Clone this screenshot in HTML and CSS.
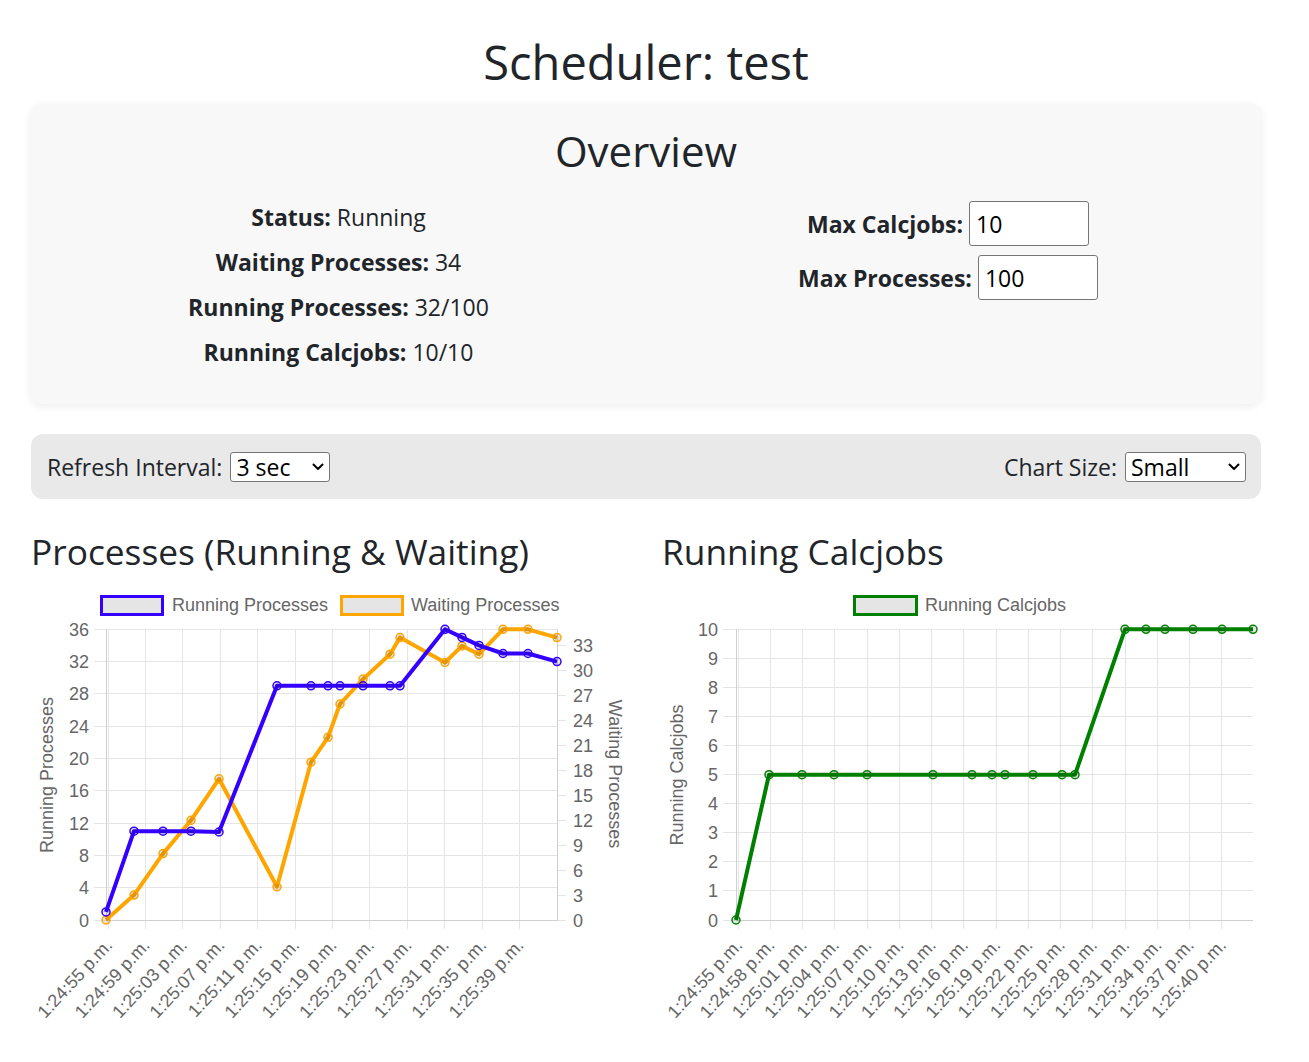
FILE: index.html
```html
<!DOCTYPE html>
<html lang="en">
<head>
<meta charset="utf-8">
<title>Scheduler: test</title>
<link rel="stylesheet" href="styles.css">
</head>
<body>
<div class="page">
  <h1 class="title">Scheduler: test</h1>

  <section class="card">
    <h2 class="card-title">Overview</h2>
    <div class="overview-grid">
      <div class="stats">
        <p class="stat"><span class="stat-key">Status:</span> Running</p>
        <p class="stat"><span class="stat-key">Waiting Processes:</span> 34</p>
        <p class="stat"><span class="stat-key">Running Processes:</span> 32/100</p>
        <p class="stat"><span class="stat-key">Running Calcjobs:</span> 10/10</p>
      </div>
      <div class="limits">
        <div class="limit-row"><label class="limit-label" for="maxcj">Max Calcjobs:</label><input class="limit-input" id="maxcj" type="text" value="10"></div>
        <div class="limit-row"><label class="limit-label" for="maxproc">Max Processes:</label><input class="limit-input" id="maxproc" type="text" value="100"></div>
      </div>
    </div>
  </section>

  <div class="controls">
    <label class="control">Refresh Interval:
      <span class="select-wrap">
        <select class="select select-interval">
          <option>1 sec</option>
          <option selected>3 sec</option>
          <option>5 sec</option>
          <option>10 sec</option>
        </select>
        <svg class="chevron" width="12" height="8" viewBox="0 0 12 8" xmlns="http://www.w3.org/2000/svg"><path d="M1.5 1.5 6 6l4.5-4.5"/></svg>
      </span>
    </label>
    <label class="control">Chart Size:
      <span class="select-wrap">
        <select class="select select-size">
          <option selected>Small</option>
          <option>Medium</option>
          <option>Large</option>
        </select>
        <svg class="chevron" width="12" height="8" viewBox="0 0 12 8" xmlns="http://www.w3.org/2000/svg"><path d="M1.5 1.5 6 6l4.5-4.5"/></svg>
      </span>
    </label>
  </div>

  <div class="charts">
    <div class="chart">
      <h2 class="chart-title">Processes (Running &amp; Waiting)</h2>
      <svg class="chart-svg" width="600" height="450" viewBox="31 585 600 450" xmlns="http://www.w3.org/2000/svg">
        <rect class="legend-box lb-blue" x="101.5" y="596.5" width="61" height="18"/>
        <text class="legend-text" x="172" y="611">Running Processes</text>
        <rect class="legend-box lb-orange" x="341.5" y="596.5" width="61" height="18"/>
        <text class="legend-text" x="411" y="611">Waiting Processes</text>

        <g class="grid">
          <line x1="94" y1="629.5" x2="557" y2="629.5"/>
          <line x1="94" y1="661.5" x2="557" y2="661.5"/>
          <line x1="94" y1="693.5" x2="557" y2="693.5"/>
          <line x1="94" y1="726.5" x2="557" y2="726.5"/>
          <line x1="94" y1="758.5" x2="557" y2="758.5"/>
          <line x1="94" y1="790.5" x2="557" y2="790.5"/>
          <line x1="94" y1="823.5" x2="557" y2="823.5"/>
          <line x1="94" y1="855.5" x2="557" y2="855.5"/>
          <line x1="94" y1="887.5" x2="557" y2="887.5"/>
          <line x1="94" y1="920.5" x2="106" y2="920.5"/>
          <line x1="108.5" y1="629" x2="108.5" y2="929"/>
          <line x1="145.5" y1="629" x2="145.5" y2="929"/>
          <line x1="182.5" y1="629" x2="182.5" y2="929"/>
          <line x1="220.5" y1="629" x2="220.5" y2="929"/>
          <line x1="257.5" y1="629" x2="257.5" y2="929"/>
          <line x1="295.5" y1="629" x2="295.5" y2="929"/>
          <line x1="332.5" y1="629" x2="332.5" y2="929"/>
          <line x1="369.5" y1="629" x2="369.5" y2="929"/>
          <line x1="407.5" y1="629" x2="407.5" y2="929"/>
          <line x1="444.5" y1="629" x2="444.5" y2="929"/>
          <line x1="482.5" y1="629" x2="482.5" y2="929"/>
          <line x1="519.5" y1="629" x2="519.5" y2="929"/>
          <line x1="557" y1="920.5" x2="566" y2="920.5"/>
          <line x1="557" y1="895.5" x2="566" y2="895.5"/>
          <line x1="557" y1="870.5" x2="566" y2="870.5"/>
          <line x1="557" y1="845.5" x2="566" y2="845.5"/>
          <line x1="557" y1="820.5" x2="566" y2="820.5"/>
          <line x1="557" y1="795.5" x2="566" y2="795.5"/>
          <line x1="557" y1="770.5" x2="566" y2="770.5"/>
          <line x1="557" y1="745.5" x2="566" y2="745.5"/>
          <line x1="557" y1="720.5" x2="566" y2="720.5"/>
          <line x1="557" y1="695.5" x2="566" y2="695.5"/>
          <line x1="557" y1="670.5" x2="566" y2="670.5"/>
          <line x1="557" y1="645.5" x2="566" y2="645.5"/>
        </g>
        <g class="axis">
          <line x1="106.5" y1="629" x2="106.5" y2="921"/>
          <line x1="557.5" y1="629" x2="557.5" y2="921"/>
          <line x1="106" y1="920.5" x2="557" y2="920.5"/>
        </g>

        <g class="tick-label">
          <text x="89" y="927">0</text>
          <text x="89" y="894.2">4</text>
          <text x="89" y="861.9">8</text>
          <text x="89" y="829.6">12</text>
          <text x="89" y="797.3">16</text>
          <text x="89" y="765">20</text>
          <text x="89" y="732.7">24</text>
          <text x="89" y="700.4">28</text>
          <text x="89" y="668.1">32</text>
          <text x="89" y="635.8">36</text>
        </g>
        <g class="tick-label tick-right">
          <text x="573" y="926.5">0</text>
          <text x="573" y="901.6">3</text>
          <text x="573" y="876.7">6</text>
          <text x="573" y="851.7">9</text>
          <text x="573" y="826.8">12</text>
          <text x="573" y="801.9">15</text>
          <text x="573" y="777">18</text>
          <text x="573" y="752.1">21</text>
          <text x="573" y="727.2">24</text>
          <text x="573" y="702.2">27</text>
          <text x="573" y="677.3">30</text>
          <text x="573" y="652.4">33</text>
        </g>

        <text class="axis-title" transform="translate(53 775) rotate(-90)">Running Processes</text>
        <text class="axis-title" transform="translate(609 774) rotate(90)">Waiting Processes</text>

        <g class="xlabel">
          <text transform="translate(109 942) rotate(-47)">1:24:55 p.m.</text>
          <text transform="translate(146.4 942) rotate(-47)">1:24:59 p.m.</text>
          <text transform="translate(183.8 942) rotate(-47)">1:25:03 p.m.</text>
          <text transform="translate(221.2 942) rotate(-47)">1:25:07 p.m.</text>
          <text transform="translate(258.6 942) rotate(-47)">1:25:11 p.m.</text>
          <text transform="translate(296 942) rotate(-47)">1:25:15 p.m.</text>
          <text transform="translate(333.4 942) rotate(-47)">1:25:19 p.m.</text>
          <text transform="translate(370.8 942) rotate(-47)">1:25:23 p.m.</text>
          <text transform="translate(408.2 942) rotate(-47)">1:25:27 p.m.</text>
          <text transform="translate(445.6 942) rotate(-47)">1:25:31 p.m.</text>
          <text transform="translate(483 942) rotate(-47)">1:25:35 p.m.</text>
          <text transform="translate(520.4 942) rotate(-47)">1:25:39 p.m.</text>
        </g>

        <polyline class="series s-orange" points="106,920 134,895.1 163,853.6 191,820.3 219,778.8 277,886.8 311,762.2 328,737.3 340,704 363,679.1 390,654.2 400,637.6 445,662.5 462,645.9 479,654.2 503,629.3 528,629.3 557,637.6"/>
        <g class="pts p-orange">
          <circle cx="106" cy="920" r="4"/><circle cx="134" cy="895.1" r="4"/><circle cx="163" cy="853.6" r="4"/><circle cx="191" cy="820.3" r="4"/><circle cx="219" cy="778.8" r="4"/><circle cx="277" cy="886.8" r="4"/><circle cx="311" cy="762.2" r="4"/><circle cx="328" cy="737.3" r="4"/><circle cx="340" cy="704" r="4"/><circle cx="363" cy="679.1" r="4"/><circle cx="390" cy="654.2" r="4"/><circle cx="400" cy="637.6" r="4"/><circle cx="445" cy="662.5" r="4"/><circle cx="462" cy="645.9" r="4"/><circle cx="479" cy="654.2" r="4"/><circle cx="503" cy="629.3" r="4"/><circle cx="528" cy="629.3" r="4"/><circle cx="557" cy="637.6" r="4"/>
        </g>
        <polyline class="series s-blue" points="106,911.9 134,831.2 163,831.2 191,831.2 219,832 277,685.8 311,685.8 328,685.8 340,685.8 363,685.8 390,685.8 400,685.8 445,629.3 462,637.4 479,645.4 503,653.5 528,653.5 557,661.6"/>
        <g class="pts p-blue">
          <circle cx="106" cy="911.9" r="4"/><circle cx="134" cy="831.2" r="4"/><circle cx="163" cy="831.2" r="4"/><circle cx="191" cy="831.2" r="4"/><circle cx="219" cy="832" r="4"/><circle cx="277" cy="685.8" r="4"/><circle cx="311" cy="685.8" r="4"/><circle cx="328" cy="685.8" r="4"/><circle cx="340" cy="685.8" r="4"/><circle cx="363" cy="685.8" r="4"/><circle cx="390" cy="685.8" r="4"/><circle cx="400" cy="685.8" r="4"/><circle cx="445" cy="629.3" r="4"/><circle cx="462" cy="637.4" r="4"/><circle cx="479" cy="645.4" r="4"/><circle cx="503" cy="653.5" r="4"/><circle cx="528" cy="653.5" r="4"/><circle cx="557" cy="661.6" r="4"/>
        </g>
      </svg>
    </div>

    <div class="chart">
      <h2 class="chart-title">Running Calcjobs</h2>
      <svg class="chart-svg" width="599" height="450" viewBox="662 585 599 450" xmlns="http://www.w3.org/2000/svg">
        <rect class="legend-box lb-green" x="854.5" y="596.5" width="62" height="18"/>
        <text class="legend-text" x="925" y="611">Running Calcjobs</text>

        <g class="grid">
          <line x1="723" y1="629.5" x2="1253" y2="629.5"/>
          <line x1="723" y1="658.5" x2="1253" y2="658.5"/>
          <line x1="723" y1="687.5" x2="1253" y2="687.5"/>
          <line x1="723" y1="716.5" x2="1253" y2="716.5"/>
          <line x1="723" y1="745.5" x2="1253" y2="745.5"/>
          <line x1="723" y1="774.5" x2="1253" y2="774.5"/>
          <line x1="723" y1="803.5" x2="1253" y2="803.5"/>
          <line x1="723" y1="832.5" x2="1253" y2="832.5"/>
          <line x1="723" y1="861.5" x2="1253" y2="861.5"/>
          <line x1="723" y1="890.5" x2="1253" y2="890.5"/>
          <line x1="723" y1="920.5" x2="736" y2="920.5"/>
          <line x1="738.5" y1="629" x2="738.5" y2="929"/>
          <line x1="770.5" y1="629" x2="770.5" y2="929"/>
          <line x1="802.5" y1="629" x2="802.5" y2="929"/>
          <line x1="834.5" y1="629" x2="834.5" y2="929"/>
          <line x1="867.5" y1="629" x2="867.5" y2="929"/>
          <line x1="899.5" y1="629" x2="899.5" y2="929"/>
          <line x1="931.5" y1="629" x2="931.5" y2="929"/>
          <line x1="963.5" y1="629" x2="963.5" y2="929"/>
          <line x1="996.5" y1="629" x2="996.5" y2="929"/>
          <line x1="1028.5" y1="629" x2="1028.5" y2="929"/>
          <line x1="1060.5" y1="629" x2="1060.5" y2="929"/>
          <line x1="1092.5" y1="629" x2="1092.5" y2="929"/>
          <line x1="1125.5" y1="629" x2="1125.5" y2="929"/>
          <line x1="1157.5" y1="629" x2="1157.5" y2="929"/>
          <line x1="1189.5" y1="629" x2="1189.5" y2="929"/>
          <line x1="1221.5" y1="629" x2="1221.5" y2="929"/>
        </g>
        <g class="axis">
          <line x1="736.5" y1="629" x2="736.5" y2="921"/>
          <line x1="736" y1="920.5" x2="1253" y2="920.5"/>
        </g>

        <g class="tick-label">
          <text x="718" y="926.5">0</text>
          <text x="718" y="897.4">1</text>
          <text x="718" y="868.4">2</text>
          <text x="718" y="839.3">3</text>
          <text x="718" y="810.2">4</text>
          <text x="718" y="781.2">5</text>
          <text x="718" y="752.1">6</text>
          <text x="718" y="723">7</text>
          <text x="718" y="693.9">8</text>
          <text x="718" y="664.9">9</text>
          <text x="718" y="635.8">10</text>
        </g>

        <text class="axis-title" transform="translate(683 775) rotate(-90)">Running Calcjobs</text>

        <g class="xlabel">
          <text transform="translate(739 942) rotate(-47)">1:24:55 p.m.</text>
          <text transform="translate(771.25 942) rotate(-47)">1:24:58 p.m.</text>
          <text transform="translate(803.5 942) rotate(-47)">1:25:01 p.m.</text>
          <text transform="translate(835.75 942) rotate(-47)">1:25:04 p.m.</text>
          <text transform="translate(868 942) rotate(-47)">1:25:07 p.m.</text>
          <text transform="translate(900.25 942) rotate(-47)">1:25:10 p.m.</text>
          <text transform="translate(932.5 942) rotate(-47)">1:25:13 p.m.</text>
          <text transform="translate(964.75 942) rotate(-47)">1:25:16 p.m.</text>
          <text transform="translate(997 942) rotate(-47)">1:25:19 p.m.</text>
          <text transform="translate(1029.25 942) rotate(-47)">1:25:22 p.m.</text>
          <text transform="translate(1061.5 942) rotate(-47)">1:25:25 p.m.</text>
          <text transform="translate(1093.75 942) rotate(-47)">1:25:28 p.m.</text>
          <text transform="translate(1126 942) rotate(-47)">1:25:31 p.m.</text>
          <text transform="translate(1158.25 942) rotate(-47)">1:25:34 p.m.</text>
          <text transform="translate(1190.5 942) rotate(-47)">1:25:37 p.m.</text>
          <text transform="translate(1222.75 942) rotate(-47)">1:25:40 p.m.</text>
        </g>

        <polyline class="series s-green" points="736,920 769,774.7 802,774.7 834,774.7 867,774.7 933,774.7 972,774.7 992,774.7 1005,774.7 1033,774.7 1062,774.7 1075,774.7 1125,629.3 1146,629.3 1165,629.3 1193,629.3 1222,629.3 1253,629.3"/>
        <g class="pts p-green">
          <circle cx="736" cy="920" r="4"/><circle cx="769" cy="774.7" r="4"/><circle cx="802" cy="774.7" r="4"/><circle cx="834" cy="774.7" r="4"/><circle cx="867" cy="774.7" r="4"/><circle cx="933" cy="774.7" r="4"/><circle cx="972" cy="774.7" r="4"/><circle cx="992" cy="774.7" r="4"/><circle cx="1005" cy="774.7" r="4"/><circle cx="1033" cy="774.7" r="4"/><circle cx="1062" cy="774.7" r="4"/><circle cx="1075" cy="774.7" r="4"/><circle cx="1125" cy="629.3" r="4"/><circle cx="1146" cy="629.3" r="4"/><circle cx="1165" cy="629.3" r="4"/><circle cx="1193" cy="629.3" r="4"/><circle cx="1222" cy="629.3" r="4"/><circle cx="1253" cy="629.3" r="4"/>
        </g>
      </svg>
    </div>
  </div>
</div>
</body>
</html>
```

FILE: styles.css
```css
* {
  box-sizing: border-box;
}

body {
  margin: 0;
  font-family: "Open Sans", "Noto Sans", sans-serif;
  color: #212529;
  background: #ffffff;
}

.page {
  width: 1230px;
  margin-left: 31px;
}

.title {
  margin: 34px 0 14px;
  font-size: 47px;
  font-weight: 400;
  line-height: 1.2;
  text-align: center;
}

.card {
  background: #f8f8f8;
  border-radius: 10px;
  box-shadow: 0 2px 10px rgba(0, 0, 0, 0.08);
  padding: 22px 0 29px;
}

.card-title {
  margin: 0 0 19px;
  font-size: 42px;
  font-weight: 400;
  line-height: 50px;
  text-align: center;
}

.overview-grid {
  display: grid;
  grid-template-columns: 1fr 1fr;
  align-items: start;
}

.stats {
  text-align: center;
}

.stat {
  margin: 0;
  font-size: 23px;
  line-height: 45px;
}

.stat-key {
  font-weight: 700;
}

.limits {
  display: flex;
  flex-direction: column;
  gap: 9px;
  padding-top: 6px;
  padding-right: 11px;
}

.limit-row {
  display: flex;
  justify-content: center;
  align-items: center;
  gap: 6px;
}

.limit-label {
  font-size: 23px;
  font-weight: 700;
}

.limit-input {
  width: 120px;
  height: 45px;
  font: 23px "Open Sans", "Noto Sans", sans-serif;
  padding: 0 6px;
  border: 1px solid #767676;
  border-radius: 3px;
  background: #ffffff;
  color: #000000;
}

.controls {
  margin-top: 30px;
  height: 65px;
  background: #e9e9e9;
  border-radius: 12px;
  padding: 0 15px 0 16px;
  display: flex;
  justify-content: space-between;
  align-items: center;
}

.control {
  display: flex;
  align-items: center;
  gap: 8px;
  font-size: 23px;
}

.select-wrap {
  position: relative;
  display: inline-flex;
}

.select {
  appearance: none;
  -webkit-appearance: none;
  height: 30px;
  font: 23px/28px "Open Sans", "Noto Sans", sans-serif;
  border: 1px solid #767676;
  border-radius: 3px;
  background-color: #ffffff;
  color: #000000;
  padding: 0 5px;
  margin: 0;
}

.select-interval {
  width: 100px;
}

.select-size {
  width: 121px;
}

.chevron {
  position: absolute;
  right: 6px;
  top: 11px;
  pointer-events: none;
  fill: none;
  stroke: #000000;
  stroke-width: 2;
  stroke-linecap: round;
  stroke-linejoin: round;
}

.charts {
  display: grid;
  grid-template-columns: 600px 599px;
  column-gap: 31px;
  margin-top: 31px;
}

.chart-title {
  margin: 0 0 13px;
  font-size: 35.3px;
  font-weight: 400;
  line-height: 42px;
}

.chart-svg {
  display: block;
  overflow: visible;
}

.legend-box {
  fill: rgba(0, 0, 0, 0.1);
  stroke-width: 3;
}

.lb-blue { stroke: #3300ff; }
.lb-orange { stroke: #ffa500; }
.lb-green { stroke: #008000; }

.legend-text,
.tick-label,
.axis-title,
.xlabel {
  font-family: "Liberation Sans", Arial, sans-serif;
  fill: #666666;
}

.legend-text {
  font-size: 18px;
}

.tick-label {
  font-size: 18px;
  text-anchor: end;
}

.tick-right {
  text-anchor: start;
}

.axis-title {
  font-size: 18px;
  text-anchor: middle;
}

.xlabel {
  font-size: 18px;
  text-anchor: end;
  dominant-baseline: central;
}

.grid line {
  stroke: #e5e5e5;
  stroke-width: 1;
}

.axis line {
  stroke: #d0d0d0;
  stroke-width: 1;
}

.series {
  fill: none;
  stroke-width: 4;
  stroke-linejoin: round;
}

.s-blue { stroke: #3300ff; }
.s-orange { stroke: #ffa500; }
.s-green { stroke: #008000; }

.pts circle {
  fill: rgba(0, 0, 0, 0.1);
  stroke-width: 1.5;
}

.p-blue circle { stroke: #3300ff; }
.p-orange circle { stroke: #ffa500; }
.p-green circle { stroke: #008000; }
```
